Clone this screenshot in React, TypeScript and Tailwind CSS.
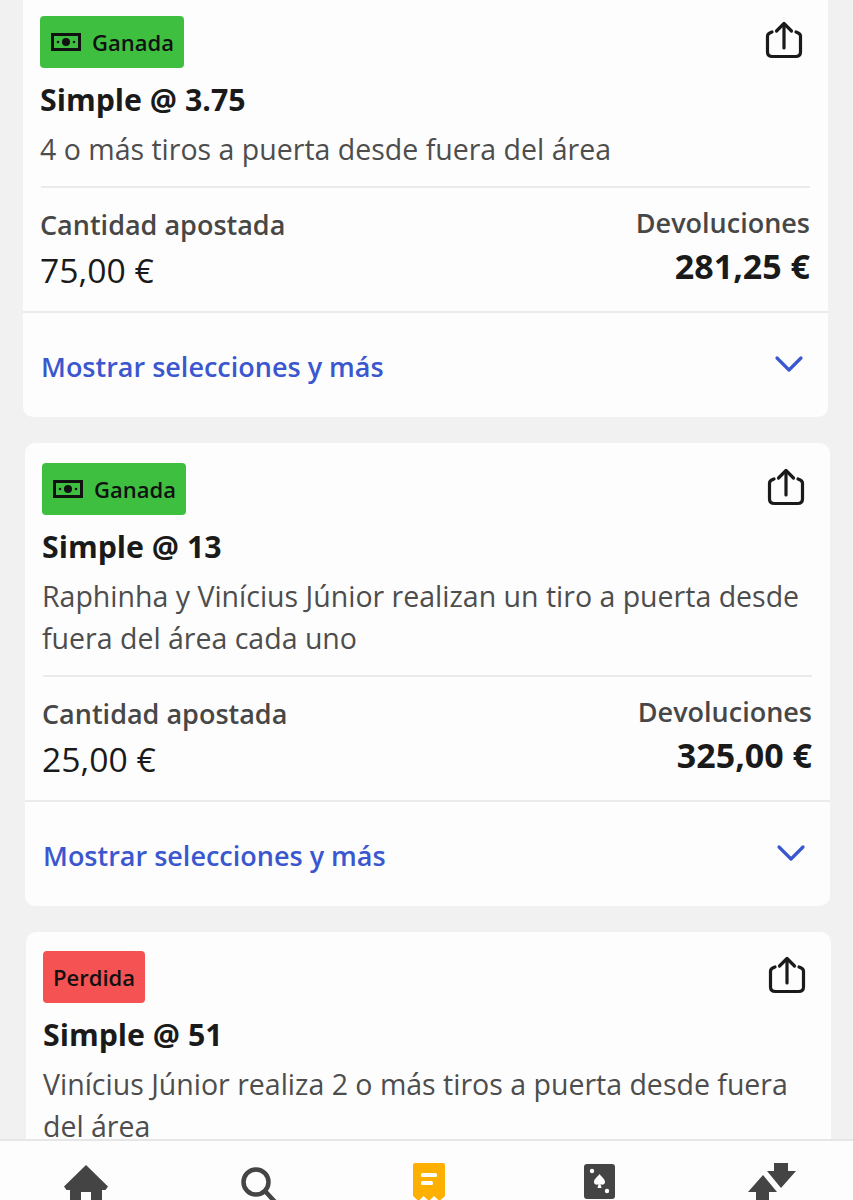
const font = { fontFamily: '"Open Sans", "Noto Sans", sans-serif' };

function ShareIcon() {
  return (
    <svg width="38" height="38" viewBox="0 0 38 38" fill="none" stroke="#1a1a1a" strokeWidth="3.2" strokeLinecap="round" strokeLinejoin="round">
      <path d="M19 3V27" />
      <path d="M11.500 10L19 2.500L26.500 10" />
      <path d="M7 11C4 12 2.500 13 2.500 15V31C2.500 34 4.500 35.500 7.500 35.500H30.500C33.500 35.500 35.500 34 35.500 31V15C35.500 13 34 12 31 11" />
    </svg>
  );
}

function MoneyIcon() {
  return (
    <svg width="30" height="18" viewBox="0 0 30 18" className="shrink-0">
      <rect x="1.500" y="1.500" width="27" height="15" fill="none" stroke="#111" strokeWidth="3" />
      <circle cx="15" cy="9" r="4" fill="#111" />
      <circle cx="7" cy="9" r="1.300" fill="#111" />
      <circle cx="23" cy="9" r="1.300" fill="#111" />
    </svg>
  );
}

function Chevron() {
  return (
    <svg width="30" height="18" viewBox="0 0 30 18" fill="none" stroke="#3b57cf" strokeWidth="3.200" strokeLinecap="round" strokeLinejoin="round">
      <path d="M3 3L15 15L27 3" />
    </svg>
  );
}

function Badge({ won }: { won: boolean }) {
  if (won) {
    return (
      <div className="flex h-[52px] w-[144px] items-center gap-[11px] rounded-[4px] bg-[#3fbf40] pl-[11px] text-[22px] font-semibold text-[#111]">
        <MoneyIcon />
        <span>Ganada</span>
      </div>
    );
  }
  return (
    <div className="flex h-[52px] w-[102px] items-center justify-center rounded-[4px] bg-[#f55353] text-[22px] font-semibold text-[#111]">
      Perdida
    </div>
  );
}

type Bet = {
  won: boolean;
  title: string;
  lines: string[];
  stake?: string;
  returns?: string;
  className: string;
};

const bets: Bet[] = [
  {
    won: true,
    title: 'Simple @ 3.75',
    lines: ['4 o más tiros a puerta desde fuera del área'],
    stake: '75,00 €',
    returns: '281,25 €',
    className: 'ml-[23px] -mt-[8px] pt-[24px]',
  },
  {
    won: true,
    title: 'Simple @ 13',
    lines: ['Raphinha y Vinícius Júnior realizan un tiro a puerta desde', 'fuera del área cada uno'],
    stake: '25,00 €',
    returns: '325,00 €',
    className: 'ml-[25px] mt-[26px] pt-[20px]',
  },
  {
    won: false,
    title: 'Simple @ 51',
    lines: ['Vinícius Júnior realiza 2 o más tiros a puerta desde fuera', 'del área'],
    className: 'ml-[26px] mt-[26px] pt-[19px]',
  },
];

function BetCard({ bet }: { bet: Bet }) {
  return (
    <section className={`w-[805px] shrink-0 rounded-[10px] bg-[#fdfdfd] ${bet.className}`}>
      <div className="mx-[17px]">
        <div className="flex items-start justify-between">
          <Badge won={bet.won} />
          <div className="mr-[8px] mt-[5px]">
            <ShareIcon />
          </div>
        </div>
        <h2 className="mt-[12px] text-[30.3px] leading-[40px] font-bold text-[#1a1a1a]">{bet.title}</h2>
        <div className="mt-[8px] text-[28.5px] leading-[42px] text-[#4d4d4d]">
          {bet.lines.map((line) => (
            <p key={line} className="whitespace-nowrap">{line}</p>
          ))}
        </div>
      </div>
      {bet.stake && (
        <>
          <div className="mx-[18px] mt-[16px] flex h-[125px] justify-between border-t-2 border-[#ebebeb]">
            <div className="-ml-[1px] pt-[19px]">
              <div className="text-[27px] leading-[36px] font-semibold text-[#474747]">Cantidad apostada</div>
              <div className="mt-[5px] text-[33.7px] leading-[44px] text-[#1a1a1a]">{bet.stake}</div>
            </div>
            <div className="pt-[17px] text-right">
              <div className="text-[27px] leading-[36px] font-semibold text-[#474747]">Devoluciones</div>
              <div className="mt-[3px] text-[34px] leading-[44px] font-bold text-[#1a1a1a]">{bet.returns}</div>
            </div>
          </div>
          <div className="flex h-[106px] items-start justify-between border-t-2 border-[#ebebeb] pl-[18px] pr-[24px]">
            <span className="mt-[36px] text-[27px] leading-[36px] font-semibold text-[#3b57cf]">Mostrar selecciones y más</span>
            <span className="mt-[42px]">
              <Chevron />
            </span>
          </div>
        </>
      )}
    </section>
  );
}

function BottomNav() {
  return (
    <nav className="flex h-[61px] shrink-0 items-start overflow-hidden border-t-2 border-[#e6e6e6] bg-[#fdfdfd]">
      <svg className="ml-[64px] mt-[24px] shrink-0" width="44" height="38" viewBox="0 0 44 38" fill="#444">
        <path d="M22 0L44 21.500L41.500 25H38V38H27V27H17V38H6V25H2.500L0 21.500Z" />
      </svg>
      <svg className="ml-[133px] mt-[26px] shrink-0" width="36" height="36" viewBox="0 0 36 36" fill="none" stroke="#444" strokeWidth="4.500">
        <circle cx="15" cy="15" r="12.500" />
        <path d="M24 24L35 36" strokeLinecap="round" />
      </svg>
      <svg className="ml-[136px] mt-[22px] shrink-0" width="32" height="38" viewBox="0 0 32 38">
        <path d="M2 0H30A2 2 0 0 1 32 2V33L26.500 38L21 33L16 38L10.500 33L5.500 38L0 33V2A2 2 0 0 1 2 0Z" fill="#fdb000" />
        <rect x="8" y="10" width="16" height="4" rx="1.500" fill="#fdfdfd" />
        <rect x="8" y="18" width="12" height="4" rx="1.500" fill="#fdfdfd" />
      </svg>
      <svg className="ml-[139px] mt-[23px] shrink-0" width="31" height="35" viewBox="0 0 31 35">
        <rect width="31" height="35" rx="3" fill="#444" />
        <circle cx="8" cy="7" r="2.200" fill="#fdfdfd" />
        <circle cx="23" cy="27" r="2.200" fill="#fdfdfd" />
        <path d="M15.500 10C18 13.500 21 15 21 18C21 20.500 18 21.500 16.500 20L17.500 24H13.500L14.500 20C13 21.500 10 20.500 10 18C10 15 13 13.500 15.500 10Z" fill="#fdfdfd" />
      </svg>
      <svg className="ml-[133px] mt-[22px] shrink-0" width="48" height="40" viewBox="0 0 48 40" fill="#444">
        <path d="M15 12L29 29H21V40H8V29H0Z" />
        <path d="M26 0H40V8H48L33 25L19 8H26Z" />
      </svg>
    </nav>
  );
}

export default function App() {
  return (
    <div className="flex h-[1200px] w-[853px] flex-col overflow-hidden bg-[#f1f1f1]" style={font}>
      <main className="flex min-h-0 flex-1 flex-col overflow-hidden">
        {bets.map((bet) => (
          <BetCard key={bet.title} bet={bet} />
        ))}
      </main>
      <BottomNav />
    </div>
  );
}
